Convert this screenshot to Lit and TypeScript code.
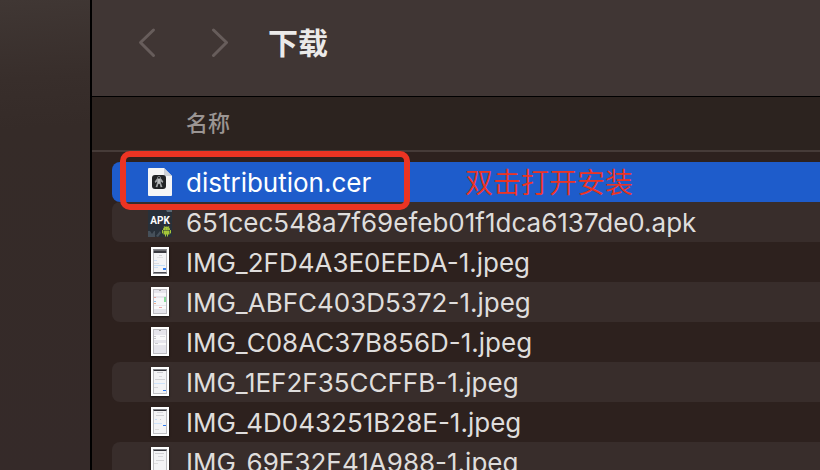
import { LitElement, html, css, svg, nothing } from "lit";
import { customElement, property, state } from "lit/decorators.js";
import { classMap } from "lit/directives/class-map.js";

type Kind = "cer" | "apk" | "image";

interface Entry {
  name: string;
  kind: Kind;
  preview?: number;
  note?: string;
}

const ENTRIES: Entry[] = [
  { name: "distribution.cer", kind: "cer", note: "双击打开安装" },
  { name: "651cec548a7f69efeb01f1dca6137de0.apk", kind: "apk" },
  { name: "IMG_2FD4A3E0EEDA-1.jpeg", kind: "image", preview: 0 },
  { name: "IMG_ABFC403D5372-1.jpeg", kind: "image", preview: 1 },
  { name: "IMG_C08AC37B856D-1.jpeg", kind: "image", preview: 2 },
  { name: "IMG_1EF2F35CCFFB-1.jpeg", kind: "image", preview: 3 },
  { name: "IMG_4D043251B28E-1.jpeg", kind: "image", preview: 4 },
  { name: "IMG_69E32E41A988-1.jpeg", kind: "image", preview: 5 },
];

// Contents of each phone screenshot thumbnail, inside a 14 x 25 area.
const PREVIEWS = [
  svg`<rect width="14" height="4" fill="#3a3a40"/><rect y="1" width="14" height="1" fill="#6b6b70"/>
    <rect x="6" y="6" width="3" height="1" fill="#d3d3d6"/><rect x="4" y="8" width="6" height="1" fill="#e2e2e4"/>
    <rect x="1" y="11" width="3" height="1" fill="#cfe0f7"/><rect x="1" y="14" width="5" height="1" fill="#dcdce0"/>
    <rect x="1" y="16" width="11" height="1" fill="#c3ddf5"/><rect x="1" y="18" width="4" height="1" fill="#cfe0f7"/>
    <rect x="10" y="19" width="3" height="2" fill="#2f7cf0"/><rect y="23" width="14" height="2" fill="#4a4a50"/>`,
  svg`<rect width="14" height="25" fill="#e6e5ec"/><rect x="6" y="1" width="2" height="1" fill="#aaa"/>
    <rect x="1" y="4" width="12" height="3" fill="#f7f7f9"/><rect x="1" y="9" width="12" height="7" fill="#f7f7f9"/>
    <rect x="1" y="8" width="2" height="1" fill="#e8a9a4"/><rect x="1" y="12" width="2" height="1" fill="#8ec3ee"/>
    <rect x="1" y="14" width="2" height="1" fill="#e9ad90"/><rect x="11" y="8" width="2" height="5" fill="#8bdc9c"/>
    <rect x="1" y="17" width="12" height="3" fill="#fafafa"/><rect x="6" y="18" width="3" height="1" fill="#eda7aa"/>`,
  svg`<rect width="14" height="25" fill="#e6e5ec"/><rect x="6" y="1" width="2" height="1" fill="#999"/>
    <rect x="1" y="6" width="12" height="5" fill="#f9f9fa"/><rect x="1" y="7" width="2" height="1" fill="#c9c9ce"/>
    <rect x="1" y="9" width="2" height="1" fill="#c9c9ce"/><rect x="7" y="7" width="5" height="1" fill="#dfdfe3"/>
    <rect x="1" y="14" width="12" height="2" fill="#f9f9fa"/><rect x="2" y="14" width="3" height="1" fill="#cacace"/>`,
  svg`<rect width="14" height="2" fill="#34343a"/><rect x="4" y="3" width="6" height="1" fill="#cbcbcf"/>
    <rect x="6" y="7" width="3" height="1" fill="#dadade"/><rect x="2" y="10" width="10" height="1" fill="#d2d2d5"/>
    <rect x="1" y="14" width="11" height="1" fill="#cfe3fa"/><rect x="1" y="18" width="4" height="1" fill="#d7d7db"/>
    <rect x="10" y="21" width="3" height="1" fill="#2f7cf0"/>`,
  svg`<rect width="14" height="2" fill="#34343a"/><rect x="4" y="3" width="6" height="1" fill="#dadade"/>
    <rect x="3" y="6" width="8" height="1" fill="#d2d2d5"/><rect x="2" y="10" width="2" height="1" fill="#c9dcf4"/>
    <rect x="7" y="10" width="1" height="1" fill="#ccc"/><rect x="1" y="14" width="8" height="1" fill="#cfe3fa"/>
    <rect x="10" y="16" width="3" height="1" fill="#2f7cf0"/><rect x="2" y="20" width="4" height="1" fill="#ddd"/>`,
  svg`<rect width="14" height="2" fill="#34343a"/><rect x="2" y="4" width="9" height="1" fill="#d2d2d5"/>
    <rect x="5" y="7" width="5" height="1" fill="#dadade"/><rect x="3" y="11" width="8" height="1" fill="#d2d2d5"/>
    <rect x="1" y="14" width="4" height="1" fill="#ddd"/>`,
];

@customElement("file-icon")
export class FileIcon extends LitElement {
  @property() kind: Kind = "image";
  @property({ type: Number }) preview = 0;

  static styles = css`
    :host {
      display: flex;
      justify-content: center;
      align-items: center;
      flex: none;
      width: 24px;
      height: 40px;
    }
    svg {
      display: block;
    }
    .photo {
      margin-bottom: 1px;
      box-shadow: 0 1px 2px rgba(0, 0, 0, 0.6);
    }
    .package {
      position: relative;
    }
    .package span {
      position: absolute;
      inset: 8px 0 auto;
      text-align: center;
      color: #fff;
      font: 700 10px/12px "Liberation Sans Narrow", "Roboto", sans-serif;
    }
  `;

  render() {
    if (this.kind === "cer") {
      return html`<svg width="24" height="28" viewBox="0 0 24 28" aria-hidden="true">
        <path d="M1 0H16L24 8V27a1 1 0 0 1-1 1H1a1 1 0 0 1-1-1V1a1 1 0 0 1 1-1z" fill="#f5f5f6" />
        <path d="M16 0L24 8H17a1 1 0 0 1-1-1z" fill="#cfd2d8" />
        <rect x="4" y="7" width="14" height="14" rx="3" fill="#222426" />
        <circle cx="11" cy="10" r="1.6" fill="none" stroke="#74787a" />
        <path d="M9 10.500h4l2.300 3-.8 1.500-1.700-1.500.2 1.500 1.400 4-1.800.3-1.100-3.800h-1l-1.100 3.800-1.800-.3 1.400-4 .2-1.500-1.700 1.500-.8-1.500z" fill="#a0a3a5" />
        <path d="M11 11v5" stroke="#dcdede" />
      </svg>`;
    }
    if (this.kind === "apk") {
      return html`<div class="package">
        <svg width="24" height="30" viewBox="0 0 24 30" aria-hidden="true">
          <path d="M0 0H17L24 5V30H0z" fill="#283039" />
          <path d="M17 0H24V5H19z" fill="#596773" />
          <path d="M0 24h2l2 3 2-3h1v6H0zM8 29l4-5 1 2-3 4z" fill="#46505a" />
          <path d="M15 23a3.500 3.500 0 0 1 7 0z" fill="#a4c639" />
          <path d="M16 19l1 1.500M21 19l-1 1.500" stroke="#a4c639" stroke-width=".7" />
          <path d="M15.500 23.500h6v4h-1.500v2h-1v-2h-1v2h-1v-2h-1.500z" fill="#a4c639" />
          <path d="M14.500 23.500v2.500M22.500 23.500v2.500" stroke="#a4c639" stroke-linecap="round" />
          <path d="M17 22h.6M19.600 22h.6" stroke="#283039" stroke-width=".7" />
        </svg>
        <span>APK</span>
      </div>`;
    }
    return html`<svg class="photo" width="18" height="29" viewBox="0 0 18 29" aria-hidden="true">
      <rect width="18" height="29" fill="#fff" />
      <rect x="2" y="2" width="14" height="25" fill="#f4f4f6" />
      <g transform="translate(2 2)">${PREVIEWS[this.preview] ?? nothing}</g>
      <rect x="2.500" y="2.500" width="13" height="24" fill="none" stroke="#a9a9ae" stroke-opacity=".7" />
    </svg>`;
  }
}

@customElement("app-root")
export class AppRoot extends LitElement {
  @state() private selected = 0;

  static styles = css`
    :host {
      display: flex;
      height: 100vh;
      overflow: hidden;
      background: #2d211e;
      color: #dfdddc;
      font-family: "Inter", "Noto Sans CJK SC", sans-serif;
      cursor: default;
    }
    .sidebar {
      flex: none;
      width: 90px;
      border-right: 2px solid #000;
      background: linear-gradient(176deg, #403734 0, #382e2b 80px, #352b28 130px, #352a29 100%);
    }
    .window {
      flex: 1;
      min-width: 0;
    }
    .toolbar {
      display: flex;
      align-items: center;
      height: 86px;
      padding: 0 44px 10px;
      border-bottom: 1px solid #000;
      background: #403634;
    }
    .nav {
      display: flex;
      gap: 48px;
      margin-right: 40px;
    }
    .nav button {
      padding: 0;
      border: 0;
      background: none;
      color: #675d5b;
    }
    .nav svg {
      display: block;
    }
    h1 {
      margin: 0;
      color: #ebeae9;
      font-size: 30px;
      line-height: 40px;
      font-weight: 700;
    }
    table,
    thead,
    tbody,
    tr,
    th {
      display: block;
      padding: 0;
    }
    thead {
      border-bottom: 2px solid #463b38;
      background: #2c231f;
    }
    th {
      padding: 6px 94px;
      color: #9b9593;
      font-size: 22px;
      line-height: 41px;
      font-weight: 500;
      text-align: left;
    }
    tbody {
      padding: 10px 0 0 20px;
    }
    .file {
      position: relative;
      border-radius: 8px 0 0 8px;
    }
    .file:nth-child(even) {
      background: #382d2b;
    }
    .file.selected {
      background: #1e5ccb;
      color: #fff;
      z-index: 1;
    }
    td {
      display: flex;
      align-items: center;
      gap: 14px;
      height: 40px;
      padding: 0 0 0 36px;
      font-size: 26px;
      line-height: 40px;
      white-space: nowrap;
    }
    .name,
    .note {
      padding-top: 2px;
    }
    .marker {
      position: absolute;
      top: -11px;
      left: 8px;
      width: 278px;
      height: 47px;
      border: 6px solid #ec3423;
      border-radius: 10px;
    }
    .note {
      position: absolute;
      top: 0;
      left: 353px;
      color: #ec3423;
      font-size: 28px;
      line-height: 38px;
      font-weight: 350;
    }
  `;

  private renderEntry(entry: Entry, index: number) {
    return html`<tr
      class=${classMap({ file: true, selected: index === this.selected })}
      @click=${() => (this.selected = index)}
    >
      <td>
        <file-icon .kind=${entry.kind} .preview=${entry.preview ?? 0}></file-icon>
        <span class="name">${entry.name}</span>
        ${entry.note ? html`<span class="marker"></span><span class="note">${entry.note}</span>` : nothing}
      </td>
    </tr>`;
  }

  render() {
    return html`
      <aside class="sidebar"></aside>
      <main class="window">
        <header class="toolbar">
          <nav class="nav">
            <button aria-label="后退">
              <svg width="22" height="32" viewBox="0 0 22 32" fill="none" stroke="currentColor" stroke-width="3" stroke-linecap="round" stroke-linejoin="round"><path d="M17.500 3.500L4.500 16L17.500 29" transform="translate(0 -.5)" /></svg>
            </button>
            <button aria-label="前进">
              <svg width="22" height="32" viewBox="0 0 22 32" fill="none" stroke="currentColor" stroke-width="3" stroke-linecap="round" stroke-linejoin="round"><path d="M7.500 3L20.500 15.500L7.500 28.500" /></svg>
            </button>
          </nav>
          <h1>下载</h1>
        </header>
        <table>
          <thead>
            <tr><th scope="col">名称</th></tr>
          </thead>
          <tbody>
            ${ENTRIES.map((entry, index) => this.renderEntry(entry, index))}
          </tbody>
        </table>
      </main>
    `;
  }
}
